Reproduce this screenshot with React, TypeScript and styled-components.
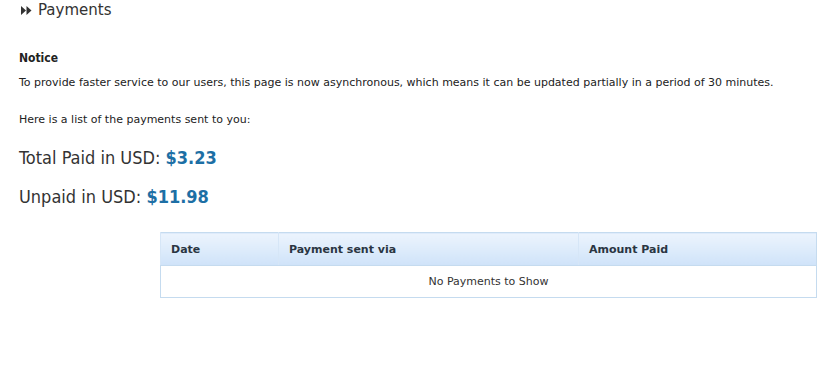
import React from "react";
import styled, {createGlobalStyle} from "styled-components";

const GlobalStyle = createGlobalStyle`
  html, body {
    margin: 0;
    padding: 0;
    background: #fff;
  }
  body {
    font-family: "DejaVu Sans", sans-serif;
    color: #222;
  }
`

const Page = styled.div`
  padding: 0 20px 0 19px;
`

const TitleRow = styled.h1`
  display: flex;
  align-items: center;
  gap: 6px;
  margin: 0;
  height: 20px;
  padding-left: 2px;
  font: 15px "DejaVu Sans", sans-serif;
  color: #333;
`

const Notice = styled.h4`
  margin: 30px 0 0;
  font: bold 12px "DejaVu Sans Condensed", "DejaVu Sans", sans-serif;
  line-height: 16px;
  color: #222;
`

const Text = styled.p<{gap?: number}>`
  margin: ${p => p.gap ?? 8}px 0 0;
  font-size: 11px;
  line-height: 16px;
  color: #222;
`

const Summary = styled.div<{gap?: number}>`
  margin-top: ${p => p.gap ?? 16}px;
  font: 18px "DejaVu Sans Condensed", "DejaVu Sans", sans-serif;
  line-height: 22px;
  color: #333;
`

const Amount = styled.span`
  color: #1d6fa5;
  font-weight: bold;
`

const Table = styled.table`
  margin: 24px 0 0 141px;
  width: 657px;
  border-collapse: collapse;
  border: 1px solid #c5dbef;
  font-size: 11px;
`

const HeadCell = styled.th<{w?: number}>`
  width: ${p => (p.w ? `${p.w}px` : "auto")};
  height: 32px;
  padding: 0 10px;
  text-align: left;
  font-weight: bold;
  color: #2a3542;
  background: linear-gradient(#ecf4fd, #cfe3f9);
  border-left: 1px solid #d6e6f7;
  border-bottom: 1px solid #c5dbef;
`

const BodyCell = styled.td`
  height: 31px;
  padding: 0 10px;
  text-align: center;
  color: #333;
`

const Arrows = () => (
  <svg width="11" height="9" viewBox="0 0 11 9">
    <path d="M0 0 L5 4.5 L0 9 Z M5.5 0 L10.5 4.5 L5.5 9 Z" fill="#333" />
  </svg>
)

export default function App() {
  return (
    <>
      <GlobalStyle />
      <Page>
        <TitleRow><Arrows />Payments</TitleRow>
        <Notice>Notice</Notice>
        <Text gap={9}>To provide faster service to our users, this page is now asynchronous, which means it can be updated partially in a period of 30 minutes.</Text>
        <Text gap={21}>Here is a list of the payments sent to you:</Text>
        <Summary gap={19}>Total Paid in USD: <Amount>$3.23</Amount></Summary>
        <Summary gap={17}>Unpaid in USD: <Amount>$11.98</Amount></Summary>
        <Table>
          <thead>
            <tr>
              <HeadCell w={97}>Date</HeadCell>
              <HeadCell w={279}>Payment sent via</HeadCell>
              <HeadCell>Amount Paid</HeadCell>
            </tr>
          </thead>
          <tbody>
            <tr>
              <BodyCell colSpan={3}>No Payments to Show</BodyCell>
            </tr>
          </tbody>
        </Table>
      </Page>
    </>
  );
}
